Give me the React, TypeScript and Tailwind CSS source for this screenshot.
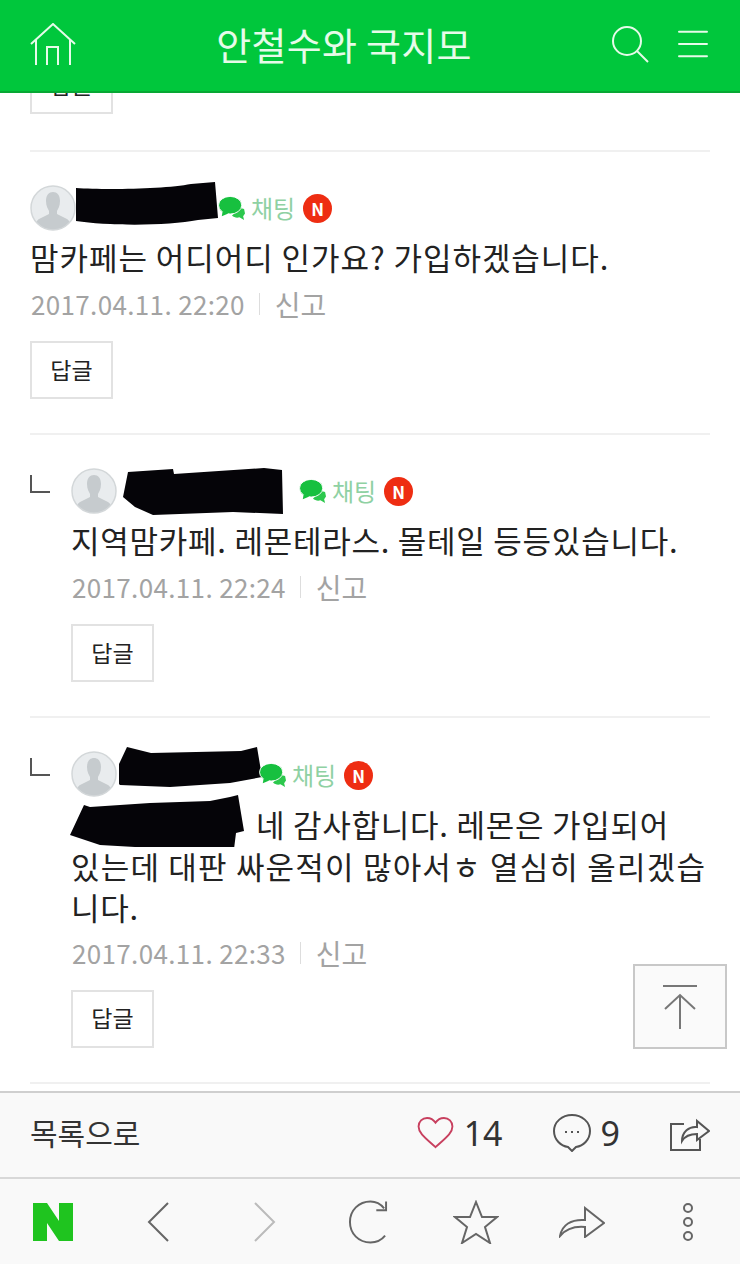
import { Menu } from "lucide-react";

const font = { fontFamily: '"Noto Sans CJK KR", "Noto Sans", sans-serif' };

function Avatar() {
  return (
    <svg viewBox="0 0 46 46" className="size-[46px] shrink-0">
      <defs>
        <clipPath id="av">
          <circle cx="23" cy="23" r="22" />
        </clipPath>
      </defs>
      <circle cx="23" cy="23" r="22" fill="#e9ecee" />
      <g clipPath="url(#av)" fill="#c6cbce">
        <path d="M16 16c0-6 3-9 7-9s7 3 7 9c0 5-2 8-3 10v3l10 5c3 2 4 5 4 12H5c0-7 1-10 4-12l10-5v-3c-1-2-3-5-3-10z" />
      </g>
      <circle cx="23" cy="23" r="22" fill="none" stroke="#d3d7d9" strokeWidth="1.5" />
    </svg>
  );
}

function Chat() {
  return (
    <span className="inline-flex items-center">
      <svg viewBox="0 0 30 28" className="h-[26px] w-[28px]">
        <path d="M24 14l4 1 1 5-2 3 1 4-5-3c-3 1-6 0-8-2z" fill="#2cc84d" />
        <ellipse cx="13" cy="11" rx="12.5" ry="9.5" fill="#17c03f" stroke="#fff" strokeWidth="1" />
        <path d="M5 17l-1 6 7-3z" fill="#17c03f" />
      </svg>
      <span className="ml-[5px] text-[24px] leading-none text-[#8fd1a3]">채팅</span>
      <span className="ml-[8px] flex size-[29px] items-center justify-center rounded-full bg-[#ee2d12] text-[17px] font-bold text-white">
        N
      </span>
    </span>
  );
}

function Blob({ d, w, h, className }: { d: string; w: number; h: number; className?: string }) {
  return (
    <svg viewBox={`0 0 ${w} ${h}`} width={w} height={h} className={className}>
      <path d={d} fill="#050408" />
    </svg>
  );
}

function Meta({ date }: { date: string }) {
  return (
    <div className="mt-[9px] flex h-[36px] items-center pl-[1px] text-[26px] leading-none text-[#a3a3a3]">
      <span className="tracking-[0.35px]">{date}</span>
      <span className="mr-[15px] ml-[14px] h-[22px] w-px bg-[#dddddd]" />
      <span className="text-[28px]">신고</span>
    </div>
  );
}

function ReplyButton() {
  return (
    <div className="mt-[19px] flex h-[58px] w-[83px] items-center justify-center border-2 border-[#e2e2e2] pb-[2px] text-[23px] text-[#222222]">
      답글
    </div>
  );
}

function Corner() {
  return <div className="mt-[7px] mr-[21px] h-[18px] w-[20px] shrink-0 border-b-2 border-l-2 border-[#555555]" />;
}

export default function App() {
  return (
    <div className="relative flex h-[1264px] w-[740px] flex-col overflow-hidden bg-white" style={font}>
      <header className="z-10 flex h-[93px] shrink-0 items-center justify-between border-b-2 border-[#07a834] bg-[#00c73c] px-[30px] pb-[3px] text-[#e6fbe9]">
        <svg viewBox="0 0 46 42" className="h-[42px] w-[46px]" fill="none" stroke="currentColor" strokeWidth="2">
          <path d="M1 21L23 1l22 20" />
          <path d="M6 17v25M40 17v25" />
          <path d="M17 42V24h11v18" />
        </svg>
        <h1 className="text-[38px] leading-none tracking-[0.3px]">안철수와 국지모</h1>
        <div className="flex items-center gap-[27px]">
          <svg viewBox="0 0 37 37" className="size-[37px]" fill="none" stroke="currentColor" strokeWidth="2">
            <circle cx="15" cy="15" r="14" />
            <path d="M25 25l11 11" />
          </svg>
          <Menu className="-mx-[4px] size-[42px]" strokeWidth={1.1} />
        </div>
      </header>

      <main className="min-h-0 flex-1 overflow-hidden px-[30px] text-[#222222]">
        <div className="-mt-[37px] flex h-[58px] w-[83px] items-center justify-center border-2 border-[#e2e2e2] pb-[2px] text-[23px]">
          답글
        </div>

        <section className="mt-[36px] border-t-2 border-[#f0f0f0] pt-[33px] pb-[34px]">
          <div className="flex h-[46px] items-center">
            <Avatar />
            <Blob
              w={144}
              h={44}
              className="-mt-[8px] shrink-0"
              d="M0 6c30 2 90 1 115-4l24-2 3 36-20 2c-30 6-90 6-122 1z"
            />
            <span className="mt-[4px] -ml-[2px]">
              <Chat />
            </span>
          </div>
          <p className="mt-[6px] text-[31px] leading-[40px] tracking-[0.95px] whitespace-nowrap">맘카페는 어디어디 인가요? 가입하겠습니다.</p>
          <Meta date="2017.04.11. 22:20" />
          <ReplyButton />
        </section>

        <section className="flex border-t-2 border-[#f0f0f0] pt-[33px] pb-[34px]">
          <Corner />
          <div className="min-w-0 flex-1">
            <div className="flex h-[46px] items-center">
              <Avatar />
              <Blob
                w={160}
                h={50}
                className="ml-[6px] shrink-0"
                d="M5 6l45-3 1 5 90-6 18 2 1 44-50-2-80 3-18-8-12-10z"
              />
              <span className="mt-[4px] ml-[16px]">
                <Chat />
              </span>
            </div>
            <p className="mt-[6px] text-[31px] leading-[40px] tracking-[0.75px] whitespace-nowrap">지역맘카페. 레몬테라스. 몰테일 등등있습니다.</p>
            <Meta date="2017.04.11. 22:24" />
            <ReplyButton />
          </div>
        </section>

        <section className="flex border-t-2 border-[#f0f0f0] pt-[33px] pb-[34px]">
          <Corner />
          <div className="min-w-0 flex-1">
            <div className="flex h-[46px] items-center">
              <Avatar />
              <Blob
                w={143}
                h={44}
                className="-mt-[10px] ml-[2px] shrink-0"
                d="M8 0l24 6 90-2 16-4 5 30-32 6-60 4-50-2-4-4-4-2z"
              />
              <span className="mt-[6px] -ml-[3px]">
                <Chat />
              </span>
            </div>
            <p className="mt-[6px] -mb-[1px] text-[31px] leading-[41px] tracking-[0.75px] whitespace-nowrap">
              <Blob
                w={176}
                h={52}
                className="mr-[10px] -ml-[1px] -mt-[18px] -mb-[2px] inline-block align-middle"
                d="M14 10l6 2 60-4 60-2 20-4 8-2 6 36-8 2-2 16H100l-70-4L0 40z"
              />
              네 감사합니다. 레몬은 가입되어
              <br />
              <span className="tracking-[1.2px]">있는데 대판 싸운적이 많아서ㅎ 열심히 올리겠습</span>
              <br />
              니다.
            </p>
            <Meta date="2017.04.11. 22:33" />
            <ReplyButton />
          </div>
        </section>

        <div className="border-t-2 border-[#f0f0f0]" />
      </main>

      <button
        type="button"
        className="absolute top-[964px] left-[633px] flex h-[85px] w-[94px] items-center justify-center border-2 border-[#c8c8c8] bg-[#fafafa]"
      >
        <svg viewBox="0 0 36 44" className="h-[44px] w-[36px]" fill="none" stroke="#777777" strokeWidth="2">
          <path d="M1 1h34M18 10v34M3 24l15-14 15 14" />
        </svg>
      </button>

      <div className="flex h-[86px] shrink-0 items-center border-t-2 border-[#cfcfcf] bg-[#f9f9f9] px-[30px] pb-[5px] text-[#333333]">
        <span className="text-[30px]">목록으로</span>
        <svg viewBox="0 0 38 34" className="ml-auto h-[32px] w-[37px]" fill="none" stroke="#c8405f" strokeWidth="2">
          <path d="M19 32C8 22 1 17 1 10c0-5 4-9 9-9 4 0 7 2 9 5 2-3 5-5 9-5 5 0 9 4 9 9 0 7-7 12-18 22z" />
        </svg>
        <span className="ml-[10px] text-[34px] leading-none" style={{ fontFamily: '"Noto Sans", sans-serif' }}>14</span>
        <svg viewBox="0 0 38 38" className="ml-[50px] h-[38px] w-[38px]" fill="none" stroke="#555555" strokeWidth="2">
          <path d="M19 1c10 0 18 7 18 16s-7 15-14 16l-4 4-4-4C8 32 1 26 1 17S9 1 19 1z" />
          <path d="M12 18h2M18 18h2M24 18h2" />
        </svg>
        <span className="ml-[10px] text-[34px] leading-none" style={{ fontFamily: '"Noto Sans", sans-serif' }}>9</span>
        <svg viewBox="0 0 40 36" className="ml-[50px] h-[36px] w-[40px]" fill="none" stroke="#555555" strokeWidth="2">
          <path d="M14 9H1v26h29V24" />
          <path d="M12 26c0-9 7-15 15-14V6l12 10-12 9v-6c-7 0-12 2-15 7z" />
        </svg>
      </div>

      <nav className="flex h-[87px] shrink-0 items-center border-t-2 border-[#d8d8d8] bg-[#f9f9f9] pl-[33px]">
        <svg viewBox="0 0 40 38" className="h-[38px] w-[40px]">
          <path d="M0 0h14l12 18V0h14v38H26L14 20v18H0z" fill="#1fc41f" />
        </svg>
        <svg viewBox="0 0 23 40" className="ml-[74px] h-[40px] w-[23px]" fill="none" stroke="#666666" strokeWidth="2">
          <path d="M21 1L2 20l19 19" />
        </svg>
        <svg viewBox="0 0 23 40" className="ml-[83px] h-[40px] w-[23px]" fill="none" stroke="#bbbbbb" strokeWidth="2">
          <path d="M2 1l19 19L2 39" />
        </svg>
        <svg viewBox="0 0 42 44" className="ml-[72px] h-[44px] w-[41px]" fill="none" stroke="#666666" strokeWidth="2">
          <path d="M37 8C33 3 28 1 23 1 11 1 2 10 2 22s9 21 21 21c6 0 11-2 15-7" />
          <path d="M39 1v9H29" />
        </svg>
        <svg viewBox="0 0 46 44" className="ml-[64px] h-[44px] w-[46px]" fill="none" stroke="#666666" strokeWidth="2">
          <path d="M23 2l6 15h15L32 27l5 16-14-9-14 9 5-16L2 17h15z" />
        </svg>
        <svg viewBox="0 0 46 32" className="ml-[60px] h-[32px] w-[46px]" fill="none" stroke="#666666" strokeWidth="2">
          <path d="M1 30c2-11 11-17 25-16V2l19 15-19 14V21C15 20 7 23 1 30z" />
        </svg>
        <svg viewBox="0 0 12 40" className="ml-[77px] h-[40px] w-[12px]" fill="none" stroke="#666666" strokeWidth="2">
          <circle cx="6" cy="6" r="4" />
          <circle cx="6" cy="20" r="4" />
          <circle cx="6" cy="34" r="4" />
        </svg>
      </nav>
    </div>
  );
}
